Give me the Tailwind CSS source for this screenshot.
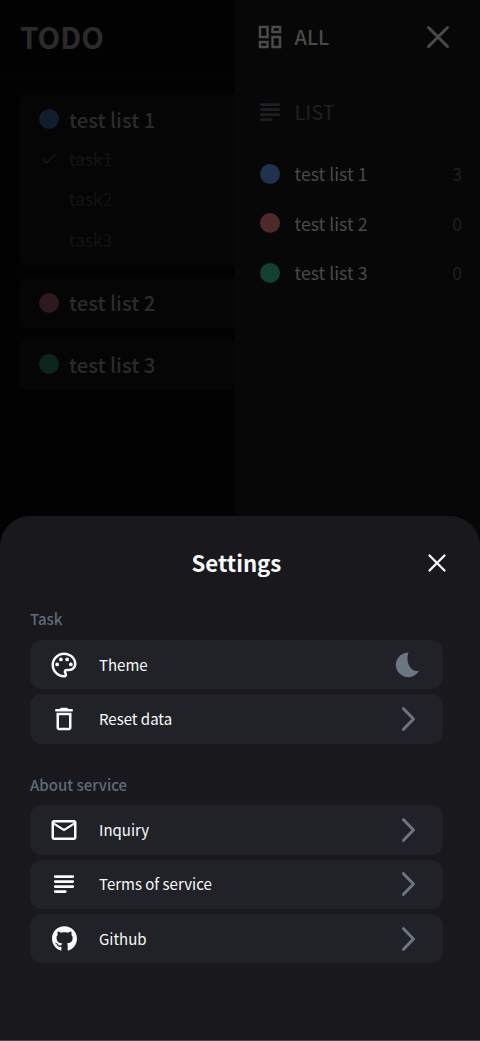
<!DOCTYPE html>
<html lang="en">
<head>
<meta charset="utf-8">
<meta name="viewport" content="width=device-width, initial-scale=1">
<title>TODO</title>
<script src="https://cdn.jsdelivr.net/npm/@tailwindcss/browser@4"></script>
</head>
<body class="bg-[#020202]">
<svg class="hidden">
  <symbol id="chevron" viewBox="0 0 30 30"><path d="M9.500 4.700 19.500 15 9.500 25.300" fill="none" stroke="currentColor" stroke-width="3" stroke-linecap="round" stroke-linejoin="round"/></symbol>
  <symbol id="lines" viewBox="0 0 24 24"><path d="M5 6h14M5 10h14M5 14h14M5 18h8" fill="none" stroke="currentColor" stroke-width="2.200" stroke-linecap="round"/></symbol>
</svg>
<div class="relative h-[1041px] w-[480px] overflow-hidden font-['Noto_Sans_CJK_JP',sans-serif]">

  <!-- Main board -->
  <main class="h-full bg-[#020202]">
    <header class="flex h-[73px] items-center border-b border-[#040404] pl-5 text-[29.500px] font-bold text-[#2b2b2b]"><h1 class="leading-[48px]">TODO</h1></header>
    <div class="flex flex-col gap-[10.5px] pl-5 pt-5">
      <section class="h-[173.500px] rounded-md bg-[#050505] pl-[19px] pt-[5px]">
        <div class="flex h-[42px] items-center gap-[10px]"><span class="size-5 rounded-full bg-[#111d2e]"></span><h2 class="text-[20.3px] font-medium leading-8 text-[#2b2b2b]">test list 1</h2></div>
        <ul class="-mt-[1.5px] text-[17.4px] leading-[40.5px] text-[#121316]">
          <li class="flex items-center gap-[10px]"><svg class="size-5 text-[#17181a]" viewBox="0 0 20 20"><path d="m3.500 10 4 4 9-9" fill="none" stroke="currentColor" stroke-width="1.500"/></svg><span class="line-through">task1</span></li>
          <li class="pl-[30px]">task2</li>
          <li class="pl-[30px]">task3</li>
        </ul>
      </section>
      <section class="flex h-[51px] items-center gap-[10px] rounded-md bg-[#050505] pl-[19px]"><span class="size-5 rounded-full bg-[#2c1a1c]"></span><h2 class="pb-px text-[20.3px] font-medium leading-8 text-[#2b2b2b]">test list 2</h2></section>
      <section class="flex h-[51px] items-center gap-[10px] rounded-md bg-[#050505] pl-[19px]"><span class="size-5 rounded-full bg-[#0b261d]"></span><h2 class="text-[20.3px] font-medium leading-8 text-[#2b2b2b]">test list 3</h2></section>
    </div>
  </main>

  <!-- Drawer -->
  <aside class="absolute inset-y-0 left-[235px] right-0 bg-[#070707] pl-5 pr-[18px]">
    <div class="flex h-[74px] items-center">
      <svg class="size-[30px] text-[#4a4a4a]" viewBox="0 0 24 24" fill="currentColor"><path d="M19 5v2h-4V5h4M9 5v6H5V5h4m10 8v6h-4v-6h4M9 17v2H5v-2h4M21 3h-8v6h8V3zM11 3H3v10h8V3zm10 8h-8v10h8V11zm-10 4H3v6h8v-6z"/></svg>
      <span class="ml-[9.500px] grow text-[20px] font-medium leading-8 text-[#4a4a4a]">ALL</span>
      <svg class="mr-[9.500px] size-[30px] text-[#4a4a4a]" viewBox="0 0 30 30"><path d="m5.500 5.500 19 19M24.500 5.500l-19 19" fill="none" stroke="currentColor" stroke-width="3" stroke-linecap="round"/></svg>
    </div>
    <div class="flex h-[75px] items-center text-[#1e2025]">
      <svg class="size-[30px]"><use href="#lines"/></svg>
      <span class="ml-[9.500px] text-[20px] leading-8">LIST</span>
    </div>
    <ul class="text-[17.7px] text-[#4a4a4a]">
      <li class="flex h-[49.5px] items-center"><span class="ml-[5px] size-5 rounded-full bg-[#1f334e]"></span><span class="ml-[14.500px] grow">test list 1</span><span class="text-[#1e2023]">3</span></li>
      <li class="flex h-[49.5px] items-center"><span class="ml-[5px] size-5 rounded-full bg-[#4e2a2d]"></span><span class="ml-[14.500px] grow">test list 2</span><span class="text-[#1e2023]">0</span></li>
      <li class="flex h-[49.5px] items-center"><span class="ml-[5px] size-5 rounded-full bg-[#14412f]"></span><span class="ml-[14.500px] grow">test list 3</span><span class="text-[#1e2023]">0</span></li>
    </ul>
  </aside>

  <!-- Settings sheet -->
  <div class="absolute inset-x-0 bottom-0 top-[516px] rounded-t-[30px] border-b border-[#48484c] bg-[#19181d] pl-[30px] pr-[37.5px] text-[#f8f9fa]">
    <header class="flex h-[94px] items-center pl-[161.500px]">
      <h2 class="grow pb-[2px] text-[22.200px] font-bold leading-9">Settings</h2>
      <svg class="-mr-[6.500px] size-6" viewBox="0 0 24 24"><path d="m4.500 4.500 15 15M19.500 4.500l-15 15" fill="none" stroke="currentColor" stroke-width="2.300" stroke-linecap="round"/></svg>
    </header>
    <h3 class="h-[30px] text-[15px] font-medium leading-[18px] text-[#5f6b79]">Task</h3>
    <ul class="flex flex-col gap-[5px] text-[15px]">
      <li class="flex h-[49.4px] items-center rounded-[12px] bg-[#212227] pl-[19px] pr-[19px]">
        <svg class="size-[30px]" viewBox="0 0 24 24" fill="currentColor"><path d="M12 22C6.490 22 2 17.510 2 12S6.490 2 12 2s10 4.040 10 9c0 3.310-2.690 6-6 6h-1.770c-.28 0-.5.22-.5.5 0 .12.05.23.13.33.41.47.64 1.060.64 1.670A2.500 2.500 0 0 1 12 22zm0-18c-4.410 0-8 3.590-8 8s3.590 8 8 8c.28 0 .5-.22.5-.5a.54.54 0 0 0-.14-.35c-.41-.46-.63-1.050-.63-1.650a2.500 2.500 0 0 1 2.500-2.500H16c2.210 0 4-1.790 4-4 0-3.860-3.590-7-8-7z"/><circle cx="6.500" cy="11.500" r="1.500"/><circle cx="9.500" cy="7.500" r="1.500"/><circle cx="14.500" cy="7.500" r="1.500"/><circle cx="17.500" cy="11.500" r="1.500"/></svg>
        <span class="ml-5 grow pt-px">Theme</span>
        <svg class="size-[30px] text-[#6b7683]" viewBox="0 0 30 30"><path d="M14.500 2.500C11 12 16.500 22 25 21A12.400 12.400 0 1 1 14.500 2.500Z" fill="currentColor"/></svg>
      </li>
      <li class="flex h-[49.4px] items-center rounded-[12px] bg-[#212227] pl-[19px] pr-[19px]">
        <svg class="size-[30px]" viewBox="0 0 24 24" fill="currentColor"><path d="M16 9v10H8V9h8m-1.500-6h-5l-1 1H5v2h14V4h-3.500l-1-1zM18 7H6v12c0 1.100.9 2 2 2h8c1.100 0 2-.9 2-2V7z"/></svg>
        <span class="ml-5 grow">Reset data</span>
        <svg class="size-[30px] text-[#6b7683]"><use href="#chevron"/></svg>
      </li>
    </ul>
    <h3 class="mt-[31px] h-[30.500px] text-[15px] font-medium leading-[19px] text-[#5f6b79]">About service</h3>
    <ul class="flex flex-col gap-[5px] text-[15px]">
      <li class="flex h-[49.4px] items-center rounded-[12px] bg-[#212227] pl-[19px] pr-[19px]">
        <svg class="size-[30px]" viewBox="0 0 24 24" fill="currentColor"><path d="M22 6c0-1.100-.9-2-2-2H4c-1.100 0-2 .9-2 2v12c0 1.100.9 2 2 2h16c1.100 0 2-.9 2-2V6zm-2 0-8 5-8-5h16zm0 12H4V8l8 5 8-5v10z"/></svg>
        <span class="ml-5 grow">Inquiry</span>
        <svg class="size-[30px] text-[#6b7683]"><use href="#chevron"/></svg>
      </li>
      <li class="flex h-[49.4px] items-center rounded-[12px] bg-[#212227] pl-[19px] pr-[19px]">
        <svg class="size-[30px]"><use href="#lines"/></svg>
        <span class="ml-5 grow">Terms of service</span>
        <svg class="size-[30px] text-[#6b7683]"><use href="#chevron"/></svg>
      </li>
      <li class="flex h-[49.4px] items-center rounded-[12px] bg-[#212227] pl-[19px] pr-[19px]">
        <svg class="mx-[2.500px] size-[25px]" viewBox="0 4 496 496" fill="currentColor"><path d="M244.800 8C106.100 8 0 113.300 0 252c0 110.900 69.800 205.800 169.500 239.200 12.800 2.300 17.300-5.600 17.300-12.100 0-6.200-.3-40.400-.3-61.400 0 0-70 15-84.700-29.800 0 0-11.400-29.100-27.800-36.600 0 0-22.900-15.700 1.600-15.400 0 0 24.900 2 38.600 25.800 21.900 38.600 58.600 27.500 72.900 20.900 2.300-16 8.800-27.100 16-33.700-55.900-6.200-112.300-14.300-112.300-110.500 0-27.500 7.600-41.300 23.600-58.900-2.600-6.500-11.100-33.300 2.600-67.900 20.900-6.500 69 27 69 27 20-5.600 41.500-8.500 62.800-8.500s42.800 2.900 62.800 8.500c0 0 48.100-33.600 69-27 13.700 34.700 5.200 61.400 2.600 67.900 16 17.700 25.800 31.500 25.800 58.900 0 96.500-58.900 104.200-114.800 110.500 9.200 7.900 17 22.900 17 46.400 0 33.700-.3 75.400-.3 83.600 0 6.500 4.600 14.400 17.300 12.100C428.200 457.800 496 362.900 496 252 496 113.300 383.500 8 244.800 8z"/><ellipse cx="160.500" cy="397.400" rx="5.500" ry="4"/><ellipse cx="140" cy="394" rx="5.500" ry="4"/><ellipse cx="181" cy="393" rx="5.500" ry="4"/><circle cx="124" cy="384" r="5"/><circle cx="113" cy="370" r="5"/><circle cx="101" cy="356" r="4"/><circle cx="90" cy="346" r="4"/></svg>
        <span class="ml-5 grow">Github</span>
        <svg class="size-[30px] text-[#6b7683]"><use href="#chevron"/></svg>
      </li>
    </ul>
  </div>
</div>
</body>
</html>
